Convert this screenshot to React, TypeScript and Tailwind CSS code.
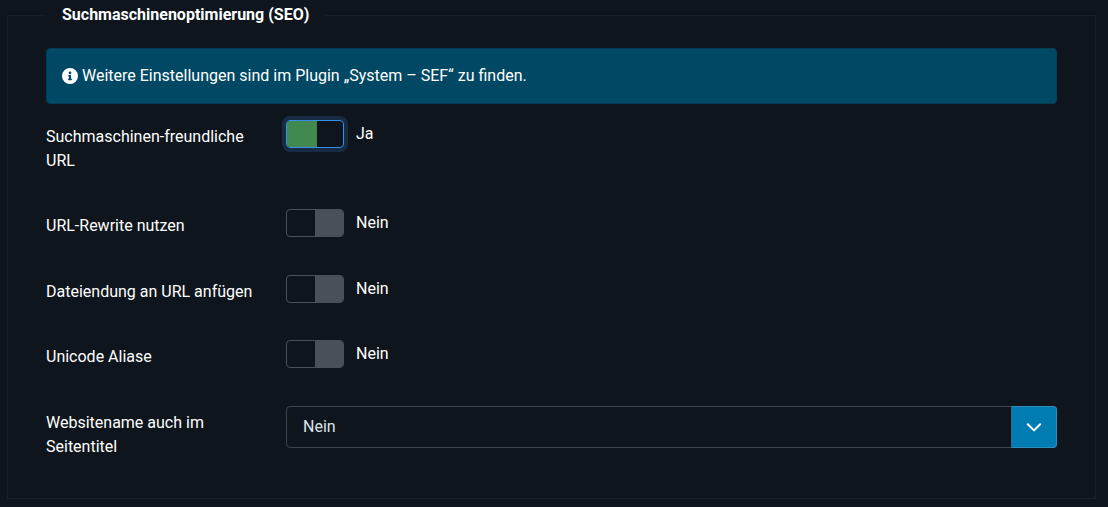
import type { ReactNode } from 'react';

function Row({ label, className, children }: { label: string; className: string; children: ReactNode }) {
  return (
    <div className={`flex items-start ${className}`}>
      <div className="w-60 shrink-0 pt-[5px] pr-5 leading-6">{label}</div>
      {children}
    </div>
  );
}

function Toggle({ on = false }: { on?: boolean }) {
  return (
    <div className="flex items-center gap-3">
      {on ? (
        <span className="flex h-7 w-[58px] overflow-hidden rounded-[4px] border border-[#3590ec] ring-4 ring-[#172b45]">
          <span className="w-[30px] bg-[#42894f]" />
        </span>
      ) : (
        <span className="flex h-7 w-[58px] justify-end overflow-hidden rounded-[4px] border border-[#495057]">
          <span className="w-7 bg-[#495057]" />
        </span>
      )}
      <span className="leading-6">{on ? 'Ja' : 'Nein'}</span>
    </div>
  );
}

export default function App() {
  return (
    <div className="h-[507px] overflow-hidden bg-[#0e151c] pt-[3px] pr-3 pl-[7px] font-[Roboto,sans-serif] text-base text-white">
      <fieldset className="h-[496px] w-[1089px] border border-[#171f27] px-[38px]">
        <legend className="px-4 text-base leading-6 font-bold">Suchmaschinenoptimierung (SEO)</legend>
        <div className="mt-[21px] flex h-14 items-center gap-1 rounded-[4px] border border-[#003d57] bg-[#004863] px-[15px]">
          <svg className="mb-px size-4 shrink-0" viewBox="8 8 496 496" fill="currentColor" aria-hidden="true">
            <path d="M256 8a248 248 0 1 0 0 496 248 248 0 0 0 0-496zm0 110a42 42 0 1 1 0 84 42 42 0 0 1 0-84zm56 254a12 12 0 0 1-12 12h-88a12 12 0 0 1-12-12v-24a12 12 0 0 1 12-12h12v-64h-12a12 12 0 0 1-12-12v-24a12 12 0 0 1 12-12h64a12 12 0 0 1 12 12v100h12a12 12 0 0 1 12 12v24z" />
          </svg>
          <span>Weitere Einstellungen sind im Plugin „System – SEF“ zu finden.</span>
        </div>
        <Row label="Suchmaschinen-freundliche URL" className="mt-4 h-[89px]"><Toggle on /></Row>
        <Row label="URL-Rewrite nutzen" className="h-[66px]"><Toggle /></Row>
        <Row label="Dateiendung an URL anfügen" className="h-[65px]"><Toggle /></Row>
        <Row label="Unicode Aliase" className="h-[66px]"><Toggle /></Row>
        <Row label="Websitename auch im Seitentitel" className="">
          <div className="flex h-[42px] flex-1 rounded-[4px] border border-[#3c444c]">
            <span className="flex flex-1 items-center pl-4 text-[#dfe3e7]">Nein</span>
            <span className="-my-px -mr-px flex w-[46px] items-center justify-center rounded-r-[4px] border border-[#2e8fbd] border-l-[#2b6f92] bg-[#007cb3]">
              <svg className="h-4 w-4" viewBox="0 0 16 16" fill="none" stroke="currentColor" strokeWidth="2" strokeLinecap="round" strokeLinejoin="round" aria-hidden="true">
                <path d="M1.8 5.2L8 11.4l6.2-6.2" />
              </svg>
            </span>
          </div>
        </Row>
      </fieldset>
    </div>
  );
}
